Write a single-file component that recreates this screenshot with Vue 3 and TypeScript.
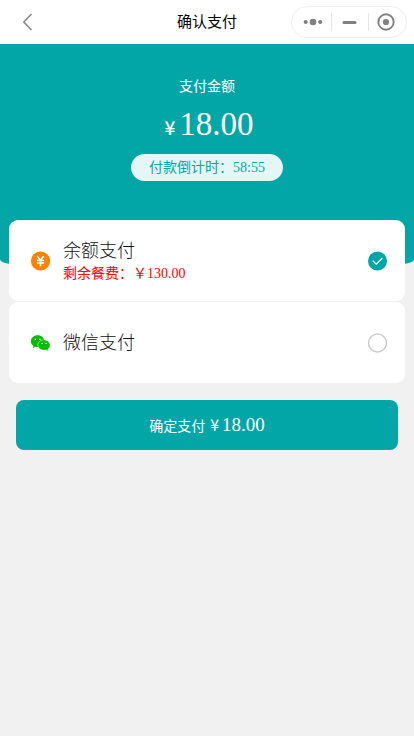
<script setup lang="ts">
import { ref } from 'vue'

type Method = 'balance' | 'wechat'

const amount = '18.00'
const countdown = '58:55'
const balance = '130.00'
const selected = ref<Method>('balance')
</script>

<template>
  <div class="page">
    <header class="navbar">
      <svg class="back" width="12" height="18" viewBox="0 0 12 18">
        <path d="M10.500 1 2.800 9l7.700 8" fill="none" stroke="#858585" stroke-width="1.500" />
      </svg>
      <h1 class="title">确认支付</h1>
      <div class="capsule">
        <svg width="116" height="31" viewBox="0 0 116 31">
          <g fill="#808080">
            <circle cx="14.700" cy="16" r="2.100" />
            <circle cx="22" cy="16" r="3.300" />
            <circle cx="29.200" cy="16" r="2.100" />
            <rect x="51.500" y="15" width="14" height="3" rx="1.500" />
            <circle cx="95" cy="16" r="3.100" />
          </g>
          <circle cx="95" cy="16" r="7.700" fill="none" stroke="#808080" stroke-width="1.900" />
          <path d="M40.500 7v18M77.500 7v18" stroke="#e4e4e4" stroke-width="1" />
        </svg>
      </div>
    </header>

    <section class="hero">
      <div class="label">支付金额</div>
      <div class="amount"><span class="yen">¥</span><span class="value">{{ amount }}</span></div>
      <div class="countdown">付款倒计时：{{ countdown }}</div>
    </section>

    <main class="methods">
      <div class="card" @click="selected = 'balance'">
        <svg class="icon" width="20" height="20" viewBox="0 0 20 20">
          <circle cx="10.500" cy="10" r="9.600" fill="#ff8200" />
          <path d="m7.200 5 3.300 4.500L13.800 5M6.900 9.500h7.200M6.900 12h7.200M10.500 9.500v5.700" fill="none" stroke="#fff" stroke-width="1.600" />
        </svg>
        <div class="info">
          <div class="name">余额支付</div>
          <div class="rest">剩余餐费：￥{{ balance }}</div>
        </div>
        <svg class="radio" width="20" height="20" viewBox="0 0 20 20">
          <template v-if="selected === 'balance'">
            <circle cx="10.500" cy="10" r="9.500" fill="#03a6a6" />
            <path d="m5.800 9.800 3.400 3.400 6.200-6.100" fill="none" stroke="#fff" stroke-width="1.300" />
          </template>
          <circle v-else cx="10.500" cy="10" r="9" fill="#fff" stroke="#ccc" stroke-width="1.400" />
        </svg>
      </div>
      <div class="card" @click="selected = 'wechat'">
        <svg class="icon" width="20" height="20" viewBox="0 0 20 20">
          <g fill="#09bb07">
            <path d="M7.600 2.200C3.900 2.200.9 4.800.9 8.200c0 1.900 1 3.600 2.600 4.700l-.7 2.300 2.700-1.400c.7.200 1.400.3 2.100.3 3.700 0 6.900-2.600 6.900-5.900S11.300 2.200 7.600 2.200Z" />
            <path stroke="#fff" stroke-width=".5" d="M14 6.900c-3.400 0-6.200 2.300-6.200 5.200s2.800 5.200 6.200 5.200c.8 0 1.500-.1 2.200-.3l2.400 1.300-.7-2.100c1.400-.9 2.200-2.400 2.200-4.100 0-2.900-2.700-5.200-6.100-5.200Z" />
          </g>
          <g fill="#fff">
            <circle cx="5.300" cy="6.200" r=".8" />
            <circle cx="9.900" cy="6.200" r=".8" />
            <circle cx="12.100" cy="10.400" r=".7" />
            <circle cx="16.100" cy="10.400" r=".7" />
          </g>
        </svg>
        <div class="info">
          <div class="name">微信支付</div>
        </div>
        <svg class="radio" width="20" height="20" viewBox="0 0 20 20">
          <template v-if="selected === 'wechat'">
            <circle cx="10.500" cy="10" r="9.500" fill="#03a6a6" />
            <path d="m5.800 9.800 3.400 3.400 6.200-6.100" fill="none" stroke="#fff" stroke-width="1.300" />
          </template>
          <circle v-else cx="10.500" cy="10" r="9" fill="#fff" stroke="#ccc" stroke-width="1.400" />
        </svg>
      </div>
    </main>

    <button class="submit" type="button">
      <span>确定支付</span><span class="submit-yen">¥</span><span class="submit-value">{{ amount }}</span>
    </button>
  </div>
</template>

<style>
body {
  background: #f1f1f1;
}
</style>

<style scoped>
.page {
  min-height: 736px;
  background: #f1f1f1;
  font-family: "Liberation Serif", "Noto Sans CJK SC", serif;
  font-weight: 400;
}
.navbar {
  display: grid;
  grid-template-columns: 156px 60px 1fr;
  align-items: center;
  height: 44px;
  padding: 0 7px 0 21px;
  box-sizing: border-box;
  background: #fff;
}
.title {
  margin: 0;
  font-size: 15px;
  line-height: 22px;
  font-weight: 400;
  white-space: nowrap;
  color: #000;
}
.capsule {
  justify-self: end;
  width: 116px;
  height: 32px;
  box-sizing: border-box;
  border: 1px solid #f0f0f0;
  border-radius: 16px;
}
.capsule svg {
  display: block;
  margin: -1px;
}
.hero {
  display: flex;
  flex-direction: column;
  align-items: center;
  height: 220px;
  padding-top: 33px;
  box-sizing: border-box;
  border-radius: 0 0 12px 12px / 0 0 5px 5px;
  background: #03a6a6;
  color: #fff;
}
.label {
  font-size: 14px;
  line-height: 20px;
}
.amount {
  display: flex;
  align-items: baseline;
  gap: 4px;
  height: 40px;
  margin: 7px 0 10px 4px;
  line-height: 40px;
}
.yen {
  font: 500 19px/24px "Noto Sans CJK SC", sans-serif;
}
.value {
  font-size: 33px;
}
.countdown {
  width: 152px;
  height: 27px;
  border-radius: 14px;
  background: #e4f6f6;
  color: #03a6a6;
  font-size: 14px;
  line-height: 27px;
  text-align: center;
}
.methods {
  display: grid;
  gap: 1px;
  margin: -44px 9px 0;
}
.card {
  display: flex;
  align-items: center;
  height: 81px;
  padding: 0 18px 0 21px;
  box-sizing: border-box;
  border-radius: 9px;
  background: #fff;
}
.icon,
.radio {
  flex: none;
}
.info {
  flex: 1;
  margin-left: 13px;
  padding-top: 1px;
}
.name {
  color: #111;
  font-size: 18px;
  font-weight: 300;
  line-height: 24px;
}
.rest {
  color: #f00;
  font-size: 14px;
  line-height: 21px;
}
.submit {
  display: flex;
  align-items: baseline;
  justify-content: center;
  width: calc(100% - 32px);
  height: 50px;
  margin: 17px 16px 0;
  padding: 0;
  border: 0;
  border-radius: 8px;
  background: #03a6a6;
  color: #fff;
  font: 400 14px/50px "Liberation Serif", "Noto Sans CJK SC", serif;
}
.submit-yen {
  margin: 0 3px 0 5px;
  font-family: "Noto Sans CJK SC", sans-serif;
  font-size: 16px;
  line-height: 20px;
}
.submit-value {
  font-size: 19px;
}
</style>
